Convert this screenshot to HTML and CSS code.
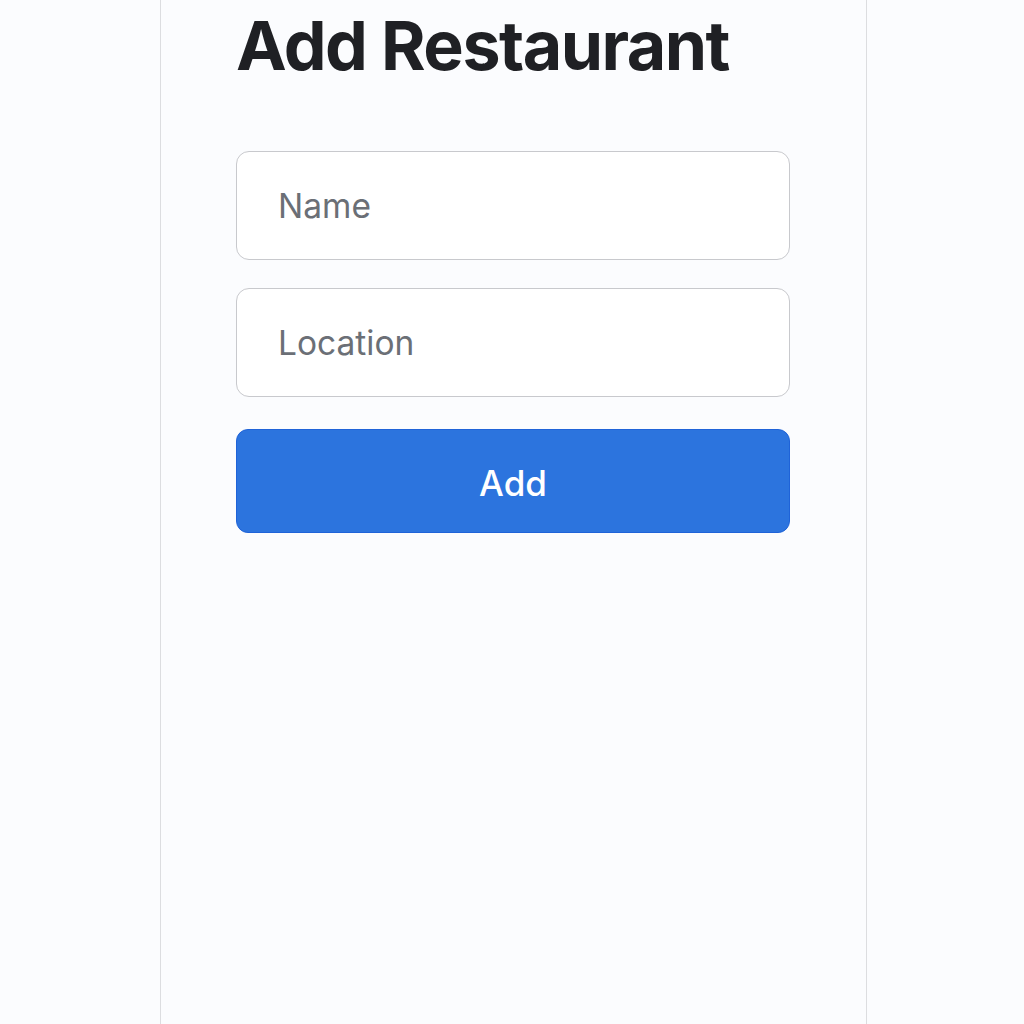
FILE: index.html
```html
<!DOCTYPE html>
<html>
<head>
<meta charset="utf-8">
<link rel="stylesheet" href="styles.css">
</head>
<body>
<div class="panel">
  <div class="content">
    <h1 class="title">Add Restaurant</h1>
    <form class="form">
      <input class="field" type="text" placeholder="Name">
      <input class="field" type="text" placeholder="Location">
      <button class="btn" type="button">Add</button>
    </form>
  </div>
</div>
</body>
</html>
```
FILE: styles.css
```css
html, body {
  margin: 0;
  padding: 0;
  background: #fbfcfe;
  height: 100%;
}
body {
  font-family: Inter, "Liberation Sans", sans-serif;
}
.panel {
  margin-left: 160px;
  width: 707px;
  height: 1024px;
  border-left: 1px solid #dcdde0;
  border-right: 1px solid #dcdde0;
  box-sizing: border-box;
  background: #fbfcfe;
}
.content {
  padding-left: 75px;
  width: 554px;
}
.title {
  margin: 0;
  padding-top: 4px;
  font-size: 68px;
  font-weight: 700;
  color: #1f2024;
  letter-spacing: -1.5px;
  line-height: 82px;
}
.form {
  display: flex;
  flex-direction: column;
  margin-top: 65px;
}
.field {
  height: 109px;
  box-sizing: border-box;
  border: 1.5px solid #c8c9cd;
  border-radius: 13px;
  background: #ffffff;
  padding: 0 0 0 41px;
  font-family: Inter, "Liberation Sans", sans-serif;
  font-size: 33.5px;
  color: #1f2024;
  outline: none;
  margin-bottom: 28px;
}
.field::placeholder {
  color: #6b6f76;
}
.field:nth-child(2) {
  margin-bottom: 32px;
}
.btn {
  height: 104px;
  border: 1px solid #1f63d8;
  border-radius: 12px;
  background: #2c74de;
  color: #ffffff;
  font-family: Inter, "Liberation Sans", sans-serif;
  font-size: 35px;
  font-weight: 500;
  padding-top: 4px;
  cursor: pointer;
}
```
